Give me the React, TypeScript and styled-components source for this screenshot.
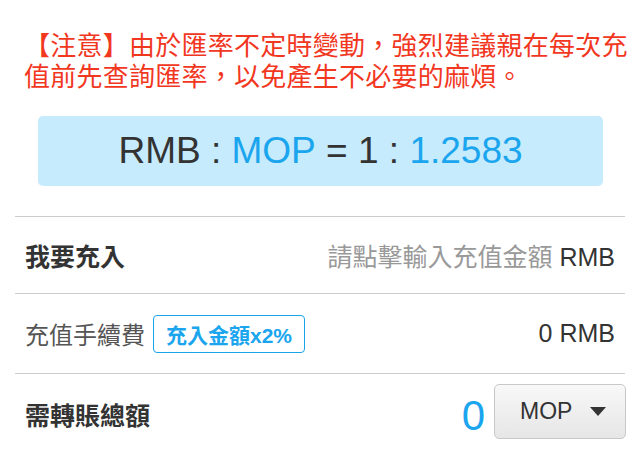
import React from "react";
import styled, { createGlobalStyle } from "styled-components";

const GlobalStyle = createGlobalStyle`
  body {
    margin: 0;
    background: #fff;
    font-family: "Liberation Sans", "Noto Sans CJK TC", sans-serif;
    color: #333;
  }
`;

const Page = styled.div`
  width: 640px;
  height: 455px;
  overflow: hidden;
`;

const Notice = styled.p`
  margin: 0;
  padding: 31px 6px 0 24px;
  color: #f2371f;
  font-size: 26px;
  line-height: 31px;
  letter-spacing: 0.25px;
`;

const RateBox = styled.div`
  margin: 23px 37px 0 38px;
  height: 70px;
  display: flex;
  align-items: center;
  justify-content: center;
  background: #c6ebfc;
  border-radius: 5px;
  font-size: 37px;
  color: #333;
  white-space: pre;
`;

const Blue = styled.span`
  color: #1aa5ee;
`;

const List = styled.div`
  margin: 30px 15px 0;
  border-top: 1px solid #ccc;
`;

const Row = styled.div<{ $h: number; $last?: boolean }>`
  height: ${(p) => p.$h}px;
  display: flex;
  align-items: center;
  justify-content: space-between;
  padding: 0 10px;
  border-bottom: ${(p) => (p.$last ? "none" : "1px solid #ccc")};
`;

const Label = styled.div<{ $bold?: boolean }>`
  display: flex;
  align-items: center;
  font-size: ${(p) => (p.$bold ? 25 : 24)}px;
  font-weight: ${(p) => (p.$bold ? 700 : 400)};
  color: ${(p) => (p.$bold ? "#333" : "#555")};
`;

const Badge = styled.span`
  margin-left: 8px;
  height: 38px;
  box-sizing: border-box;
  display: inline-flex;
  align-items: center;
  padding: 0 12px;
  border: 1px solid #1ba3ea;
  border-radius: 4px;
  color: #1aa5ee;
  font-size: 21px;
  font-weight: 700;
`;

const Value = styled.div`
  font-size: 25px;
  color: #333;
`;

const Placeholder = styled.span`
  color: #999;
`;

const Total = styled.div`
  display: flex;
  align-items: center;
  margin-right: -11px;
`;

const Amount = styled.span`
  font-size: 42px;
  line-height: 1;
  color: #1aa5ee;
  margin-right: 9px;
  margin-top: 3px;
`;

const CurrencyButton = styled.button`
  width: 132px;
  height: 55px;
  box-sizing: border-box;
  display: flex;
  align-items: center;
  padding: 0 0 0 25px;
  gap: 18px;
  border: 1px solid #c8c8c8;
  border-radius: 5px;
  background: linear-gradient(#f8f8f8, #e6e6e6);
  font-family: inherit;
  font-size: 23px;
  color: #333;
  margin-bottom: 5px;
`;

const Caret = styled.span`
  width: 0;
  height: 0;
  border-left: 8px solid transparent;
  border-right: 8px solid transparent;
  border-top: 9px solid #333;
`;

export default function App() {
  return (
    <Page>
      <GlobalStyle />
      <Notice>
        【注意】由於匯率不定時變動，強烈建議親在每次充值前先查詢匯率，以免產生不必要的麻煩。
      </Notice>
      <RateBox>
        RMB : <Blue>MOP</Blue> = 1 : <Blue>1.2583</Blue>
      </RateBox>
      <List>
        <Row $h={76}>
          <Label $bold>我要充入</Label>
          <Value>
            <Placeholder>請點擊輸入充值金額</Placeholder> RMB
          </Value>
        </Row>
        <Row $h={79}>
          <Label>
            充值手續費<Badge>充入金額x2%</Badge>
          </Label>
          <Value>0 RMB</Value>
        </Row>
        <Row $h={80} $last>
          <Label $bold>需轉賬總額</Label>
          <Total>
            <Amount>0</Amount>
            <CurrencyButton>
              MOP <Caret />
            </CurrencyButton>
          </Total>
        </Row>
      </List>
    </Page>
  );
}
